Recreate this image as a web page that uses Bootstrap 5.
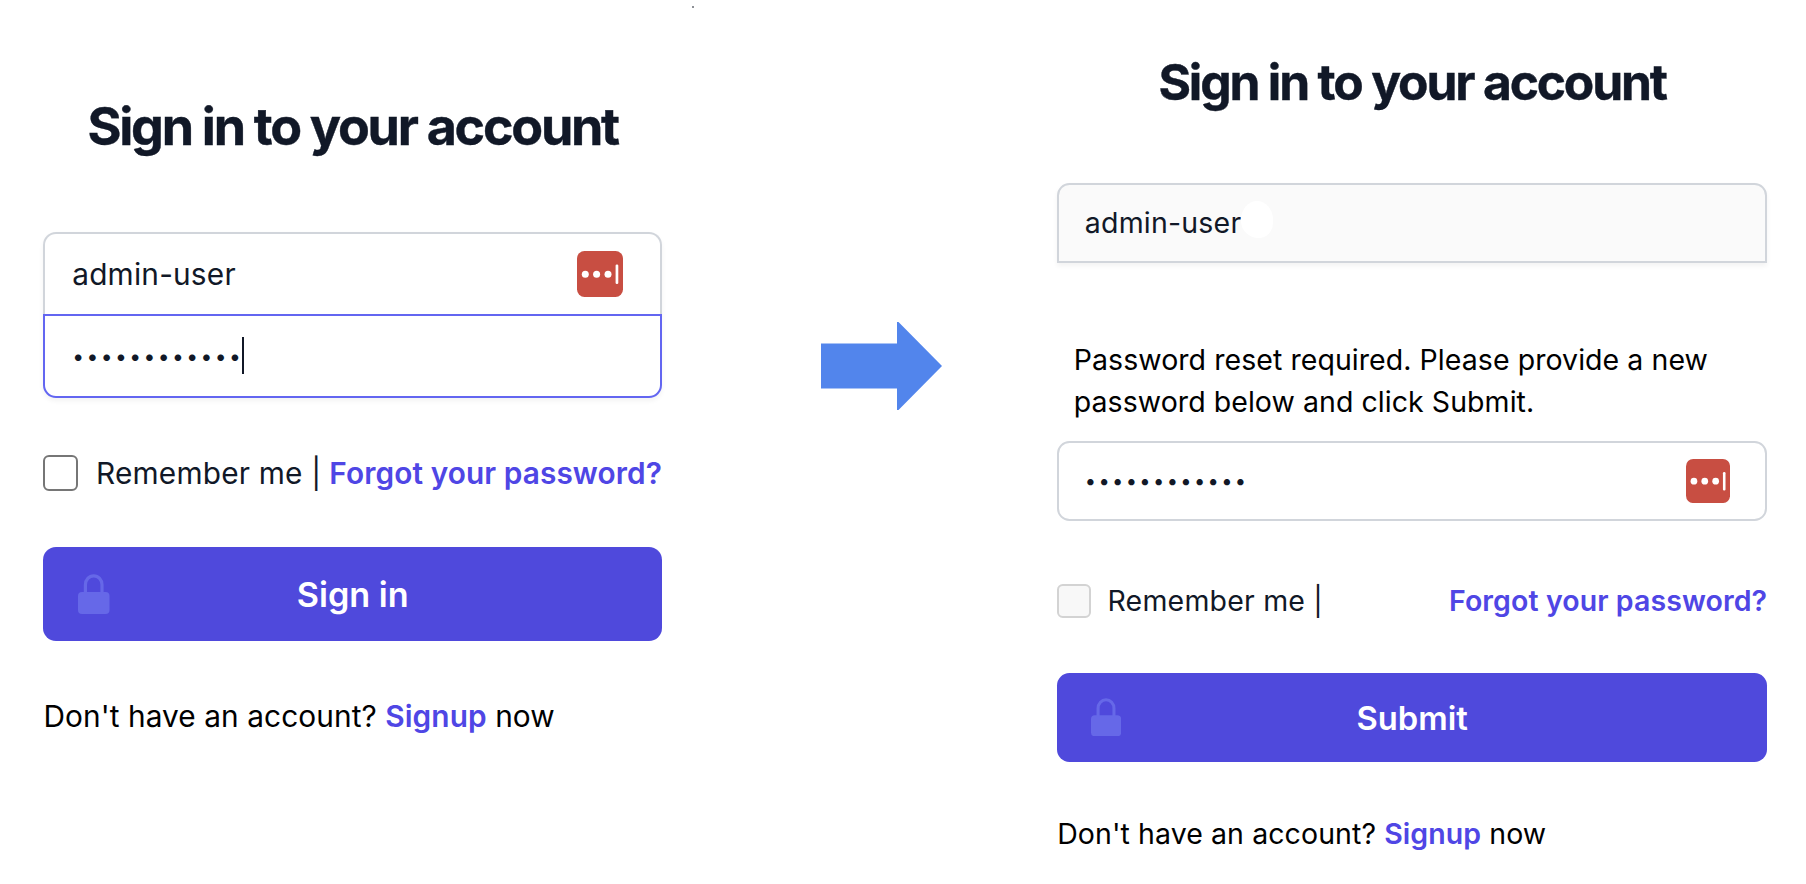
<!DOCTYPE html>
<html lang="en">
<head>
<meta charset="utf-8">
<meta name="viewport" content="width=device-width, initial-scale=1">
<title>Sign in to your account</title>
<link href="https://cdn.jsdelivr.net/npm/bootstrap@5.3.0/dist/css/bootstrap.min.css" rel="stylesheet">
<style>
body{font-family:Inter,"Liberation Sans",sans-serif;color:#000;background:#fff;height:884px;overflow:hidden}
/* Each panel is sized in --u, so both share one set of measures */
.panel{--u:1px;font-size:calc(var(--u)*29.8);letter-spacing:.007em;line-height:calc(var(--u)*44);flex:none}
.panel-login{width:618.600px;margin-left:43.4px;padding-top:97px}
.panel-reset{--u:.957px;width:710px;margin-left:115px;padding-top:53.8px}
.panel h1{font-size:calc(var(--u)*52);line-height:calc(var(--u)*60);font-weight:700;-webkit-text-stroke:.4px #111827;letter-spacing:calc(var(--u)*-2.26);color:#111827;margin:0 0 calc(var(--u)*74.6);white-space:nowrap}
.field{height:calc(var(--u)*84);border:2px solid #d1d5db;color:#111827;padding:0 calc(var(--u)*36.5) 0 calc(var(--u)*26.8);display:flex;align-items:center;background:#fff}
.field-top{border-radius:calc(var(--u)*13) calc(var(--u)*13) 0 0}
.field-bottom{border-radius:0 0 calc(var(--u)*13) calc(var(--u)*13)}
.field-single{border-radius:calc(var(--u)*13)}
.field-open{border-bottom:0;height:82px}
.field-focus{border-color:#6366f1}
.field-off{background:#fafafa}
.lift{box-shadow:0 3px 5px rgba(0,0,0,.05)}
.bullets{font-size:calc(var(--u)*21);letter-spacing:calc(var(--u)*2.45);line-height:1;padding-top:calc(var(--u)*1.5)}
.caret{width:2px;height:37px;background:#111827;margin-left:-1px}
.vault{width:calc(var(--u)*46);height:calc(var(--u)*46)}
.smudge{width:32px;height:37px;margin-top:-6px;background:#fff;border-radius:50% 50% 45% 55%/50% 50% 40% 45%}
.remember{height:calc(var(--u)*36);margin-top:calc(var(--u)*57);color:#111827;white-space:nowrap}
.panel-reset .remember{margin-top:63px}
.tick{width:calc(var(--u)*35);height:calc(var(--u)*36);border:2px solid #767676;border-radius:calc(var(--u)*6);margin-right:calc(var(--u)*17.6);flex:none}
.tick-off{border-color:#d3d3d3;background:#f8f8f8}
.accent{color:#4f46e5;font-weight:600;text-decoration:none;letter-spacing:.003em}
.btn-go,.btn-go:hover{background:#4f49dc;color:#fff;border:0;border-radius:calc(var(--u)*13);height:calc(var(--u)*93.3);margin-top:calc(var(--u)*56.7);font-size:calc(var(--u)*34.2);font-weight:600;letter-spacing:0;line-height:1;padding-top:8px}
.lock{left:calc(var(--u)*35);top:calc(var(--u)*26.7);width:calc(var(--u)*32);height:calc(var(--u)*40)}
.signup{margin-top:calc(var(--u)*53.5);letter-spacing:.003em}
.message{margin-top:76px;margin-bottom:17px;padding-left:16.6px;line-height:42.3px;letter-spacing:.002em}
.arrow{width:121px;height:88px;margin:322px 0 0 159.2px;flex:none}
.speck{left:692px;top:6px;width:2px;height:2px;background:#8d9096}
</style>
</head>
<body class="d-flex align-items-start position-relative">
<svg width="0" height="0" class="position-absolute" aria-hidden="true">
  <symbol id="vault" viewBox="0 0 46 46"><rect width="46" height="46" rx="7.5" fill="#c84e42"/><g fill="#fff"><circle cx="8.3" cy="23.2" r="3.5"/><circle cx="19.6" cy="23.2" r="3.5"/><circle cx="31" cy="23.2" r="3.5"/><rect x="38.6" y="13.6" width="2.7" height="19.4" rx="1.2"/></g></symbol>
  <symbol id="lock" viewBox="0 0 32 40"><rect x="0" y="18" width="31.500" height="22" rx="4" fill="#6668e8"/><path d="M7.4 19V10.800a8.3 9 0 0 1 16.600 0V19" fill="none" stroke="#6668e8" stroke-width="3.2"/></symbol>
</svg>
<i class="speck position-absolute"></i>

<main class="panel panel-login">
  <h1 class="text-center">Sign in to your account</h1>
  <div class="lift field-single">
    <div class="field field-top field-open"><span>admin-user</span><svg class="vault ms-auto"><use href="#vault"/></svg></div>
    <div class="field field-bottom field-focus"><span class="bullets">••••••••••••</span><i class="caret"></i></div>
  </div>
  <div class="remember d-flex align-items-center">
    <span class="tick"></span><span>Remember me |</span><a href="#" class="accent ms-auto">Forgot your password?</a>
  </div>
  <button class="btn btn-go w-100 position-relative d-flex align-items-center justify-content-center"><svg class="lock position-absolute"><use href="#lock"/></svg>Sign in</button>
  <p class="signup mb-0">Don't have an account? <a href="#" class="accent">Signup</a> now</p>
</main>

<svg class="arrow" viewBox="0 0 121 88"><path d="M0 21.5H76V0h1.5L121 44 77.500 88H76V66.500H0Z" fill="#5285ec"/></svg>

<section class="panel panel-reset">
  <h1 class="text-center">Sign in to your account</h1>
  <div class="field field-top field-off lift"><span>admin-user</span><i class="smudge"></i></div>
  <p class="message">Password reset required. Please provide a new<br>password below and click Submit.</p>
  <div class="field field-single"><span class="bullets">••••••••••••</span><svg class="vault ms-auto"><use href="#vault"/></svg></div>
  <div class="remember d-flex align-items-center">
    <span class="tick tick-off"></span><span>Remember me |</span><a href="#" class="accent ms-auto">Forgot your password?</a>
  </div>
  <button class="btn btn-go w-100 position-relative d-flex align-items-center justify-content-center"><svg class="lock position-absolute"><use href="#lock"/></svg>Submit</button>
  <p class="signup mb-0">Don't have an account? <a href="#" class="accent">Signup</a> now</p>
</section>
<script src="https://cdn.jsdelivr.net/npm/bootstrap@5.3.0/dist/js/bootstrap.bundle.min.js"></script>
</body>
</html>
